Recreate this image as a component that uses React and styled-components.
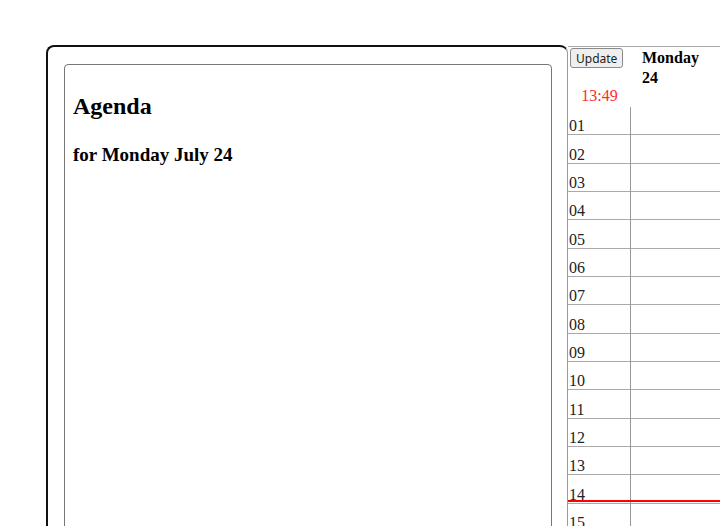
import React from "react"
import styled, { createGlobalStyle } from "styled-components"

const GlobalStyle = createGlobalStyle`
  html, body {
    margin: 0;
    padding: 0;
    background: #fff;
    overflow: hidden;
  }
  body {
    font-family: "Liberation Serif", "Times New Roman", serif;
    color: #000;
  }
`

const ROW_H = 28.33

const Page = styled.div`
  display: flex;
  align-items: flex-start;
  padding: 45px 0 0 46px;
  width: 900px;
  height: 526px;
  box-sizing: border-box;
`

const AgendaPanel = styled.div`
  width: 522px;
  height: 600px;
  box-sizing: border-box;
  border: 2px solid #111;
  border-right: 1px solid #9a9a9a;
  border-bottom: none;
  border-radius: 8px 8px 0 0;
  padding: 17px 15px 0 16px;
  flex-shrink: 0;
`

const AgendaBox = styled.div`
  height: 560px;
  border: 1px solid #777;
  border-radius: 4px;
  padding: 0 8px;
`

const AgendaTitle = styled.h2`
  font-size: 24px;
  font-weight: bold;
  margin: 27px 0 0;
  line-height: 28px;
`

const AgendaSub = styled.h3`
  font-size: 19px;
  font-weight: bold;
  margin: 24px 0 0;
  line-height: 22px;
`

const Calendar = styled.div`
  flex: 1;
  margin-top: 1px;
  border-top: 1px solid #aaa;
  min-width: 0;
`

const Header = styled.div`
  display: flex;
  height: 60px;
`

const Corner = styled.div`
  width: 63px;
  display: flex;
  flex-direction: column;
  align-items: center;
`

const UpdateButton = styled.button`
  align-self: flex-start;
  margin: 1px 0 0 2px;
  height: 20px;
  padding: 0 5px;
  font-family: "Noto Sans", "Open Sans", sans-serif;
  font-size: 12px;
  color: #222;
  background: #efefef;
  border: 1px solid #8a8a8a;
  border-radius: 3px;
`

const Now = styled.div`
  color: #ff2a2a;
  font-size: 16px;
  line-height: 18px;
  margin-top: 19px;
`

const DayHead = styled.div`
  padding: 3px 0 0 11px;
  font-weight: bold;
  font-size: 16px;
  line-height: 16px;
  div + div {
    margin-top: 4px;
  }
`

const Grid = styled.div`
  position: relative;
`

const Row = styled.div`
  display: flex;
  height: ${ROW_H}px;
  box-sizing: border-box;
  border-bottom: 1px solid #aaa;
`

const HourLabel = styled.div`
  width: 63px;
  box-sizing: border-box;
  border-right: 1px solid #999;
  margin-bottom: -1px;
  padding-left: 1px;
  display: flex;
  align-items: flex-end;
  font-size: 16px;
  color: #222;
`

const Slot = styled.div`
  flex: 1;
`

const NowLine = styled.div`
  position: absolute;
  left: 0;
  right: 0;
  height: 2px;
  background: #f00;
`

const hours = Array.from({ length: 16 }, (_, i) => String(i + 1).padStart(2, "0"))

export default function App() {
  const nowTop = (13 + 49 / 60) * ROW_H + 1.6
  return (
    <>
      <GlobalStyle />
      <Page>
        <AgendaPanel>
          <AgendaBox>
            <AgendaTitle>Agenda</AgendaTitle>
            <AgendaSub>for Monday July 24</AgendaSub>
          </AgendaBox>
        </AgendaPanel>
        <Calendar>
          <Header>
            <Corner>
              <UpdateButton>Update</UpdateButton>
              <Now>13:49</Now>
            </Corner>
            <DayHead>
              <div>Monday</div>
              <div>24</div>
            </DayHead>
          </Header>
          <Grid>
            {hours.map(h => (
              <Row key={h}>
                <HourLabel>{h}</HourLabel>
                <Slot />
              </Row>
            ))}
            <NowLine style={{ top: nowTop }} />
          </Grid>
        </Calendar>
      </Page>
    </>
  )
}
